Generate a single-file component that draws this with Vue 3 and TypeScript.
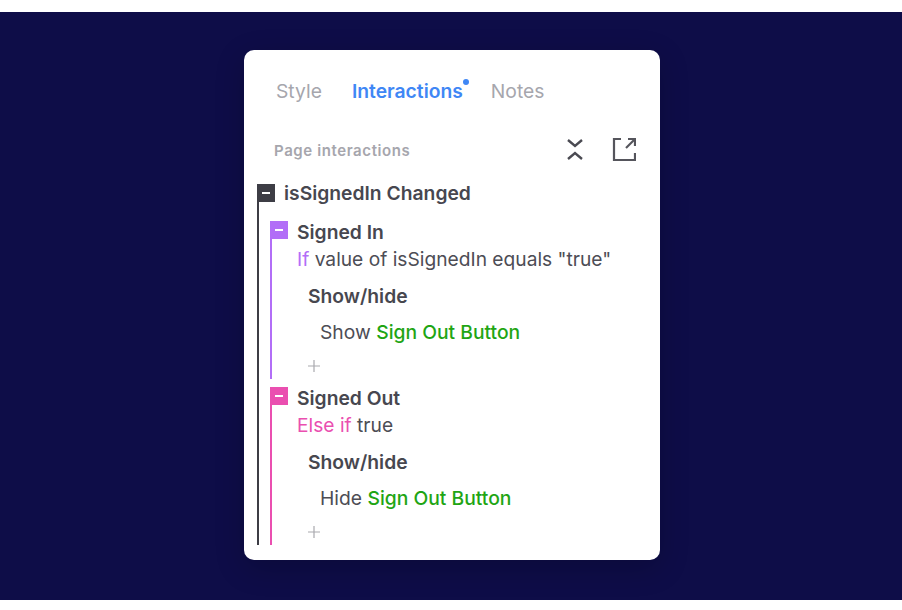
<script setup lang="ts">
type Branch = {
  title: string
  color: string
  keyword: string
  condition: string
  verb: string
}

const tabs = ['Style', 'Interactions', 'Notes']

const branches: Branch[] = [
  { title: 'Signed In', color: '#b26ef7', keyword: 'If', condition: 'value of isSignedIn equals "true"', verb: 'Show' },
  { title: 'Signed Out', color: '#ea4fb0', keyword: 'Else if', condition: 'true', verb: 'Hide' },
]
</script>

<template>
  <main class="page">
    <section class="panel">
      <nav class="tabs">
        <span
          v-for="tab in tabs"
          :key="tab"
          class="tab"
          :class="{ active: tab === 'Interactions' }"
        >{{ tab }}</span>
      </nav>

      <header class="head">
        <span class="head-title">Page interactions</span>
        <div class="head-icons">
          <svg width="18" height="24" viewBox="0 0 18 24" fill="none" stroke="#4a4a52" stroke-width="2.4">
            <path d="M2 3l7 6 7-6" />
            <path d="M2 22l7-6 7 6" />
          </svg>
          <svg width="24" height="24" viewBox="0 0 24 24" fill="none" stroke="#55555c" stroke-width="2.2">
            <path d="M9 2H2v21h21v-7" />
            <path d="M16 2h7v7" />
            <path d="M23 2l-9 9" />
          </svg>
        </div>
      </header>

      <div class="tree">
        <div class="case">
          <span class="marker root-marker"><i></i></span>
          <h2 class="case-title">isSignedIn Changed</h2>

          <div
            v-for="b in branches"
            :key="b.title"
            class="branch"
            :style="{ borderLeftColor: b.color }"
          >
            <span class="marker" :style="{ background: b.color }"><i></i></span>
            <h3 class="branch-title">{{ b.title }}</h3>
            <p class="cond"><span :style="{ color: b.color }">{{ b.keyword }}</span> {{ b.condition }}</p>
            <h4 class="action">Show/hide</h4>
            <p class="target">{{ b.verb }} <span class="green">Sign Out Button</span></p>
            <svg class="plus" width="12" height="12" viewBox="0 0 12 12" stroke="#a9a9ae" stroke-width="1.2">
              <path d="M6 0v12M0 6h12" />
            </svg>
          </div>
        </div>
      </div>
    </section>
  </main>
</template>

<style>
html,
body {
  background: #fff;
}
</style>

<style scoped>
.page {
  width: 902px;
  height: 588px;
  margin-top: 12px;
  padding-top: 38px;
  box-sizing: border-box;
  background: #0e0d48;
  font-family: Inter, "Liberation Sans", sans-serif;
  overflow: hidden;
}

.panel {
  width: 416px;
  height: 510px;
  margin-left: 244px;
  box-sizing: border-box;
  padding: 28px 13px 0;
  background: #fff;
  border-radius: 10px;
  box-shadow: 0 8px 30px rgba(0, 0, 0, 0.2);
}

.tabs {
  display: flex;
  gap: 30px;
  padding-left: 19px;
  height: 26px;
  align-items: center;
}

.tab {
  font-size: 19.3px;
  line-height: 26px;
  color: #a6a6ad;
}

.tab.active {
  position: relative;
  color: #3f87f5;
  font-weight: 600;
  margin-right: -2px;
}

.tab.active::after {
  content: '';
  position: absolute;
  right: -6px;
  top: 1px;
  width: 6px;
  height: 6px;
  border-radius: 50%;
  background: #3f87f5;
}

.head {
  display: flex;
  justify-content: space-between;
  align-items: center;
  height: 32px;
  margin-top: 30px;
  padding: 0 11px 0 17px;
}

.head-title {
  font-size: 15px;
  font-weight: 600;
  letter-spacing: 0.6px;
  color: #a6a6ad;
}

.head-icons {
  display: flex;
  align-items: center;
  gap: 28px;
  margin-top: -3px;
}

.tree {
  margin-top: 18px;
}

.case {
  position: relative;
  width: 100%;
  height: 361px;
  box-sizing: border-box;
  padding-left: 11px;
  border-left: 2px solid #3d3d45;
}

.marker {
  position: absolute;
  left: -2px;
  top: 0;
  width: 17.5px;
  height: 17.5px;
  display: flex;
  align-items: center;
  justify-content: center;
}

.marker i {
  display: block;
  width: 8px;
  height: 2px;
  background: #fff;
}

.root-marker {
  background: #3d3d45;
}

.case-title {
  margin: 0;
  padding-left: 14px;
  font-size: 19.3px;
  line-height: 18px;
  font-weight: 600;
  color: #47474f;
}

.branch {
  position: relative;
  height: 158px;
  margin-top: 19px;
  padding-left: 25px;
  border-left: 2px solid;
}

.branch + .branch {
  margin-top: 8px;
}

.branch-title {
  margin: 0;
  font-size: 19.3px;
  line-height: 22px;
  font-weight: 600;
  color: #47474f;
}

.cond {
  margin: 5px 0 0;
  font-size: 19.2px;
  line-height: 22px;
  color: #4d4d55;
}

.action {
  margin: 15px 0 0 11px;
  font-size: 19.3px;
  line-height: 22px;
  font-weight: 600;
  color: #47474f;
}

.target {
  margin: 14px 0 0 23px;
  font-size: 19.3px;
  line-height: 22px;
  color: #4d4d55;
}

.green {
  color: #1fa514;
  font-weight: 500;
}

.plus {
  display: block;
  margin: 17px 0 0 11px;
}
</style>
